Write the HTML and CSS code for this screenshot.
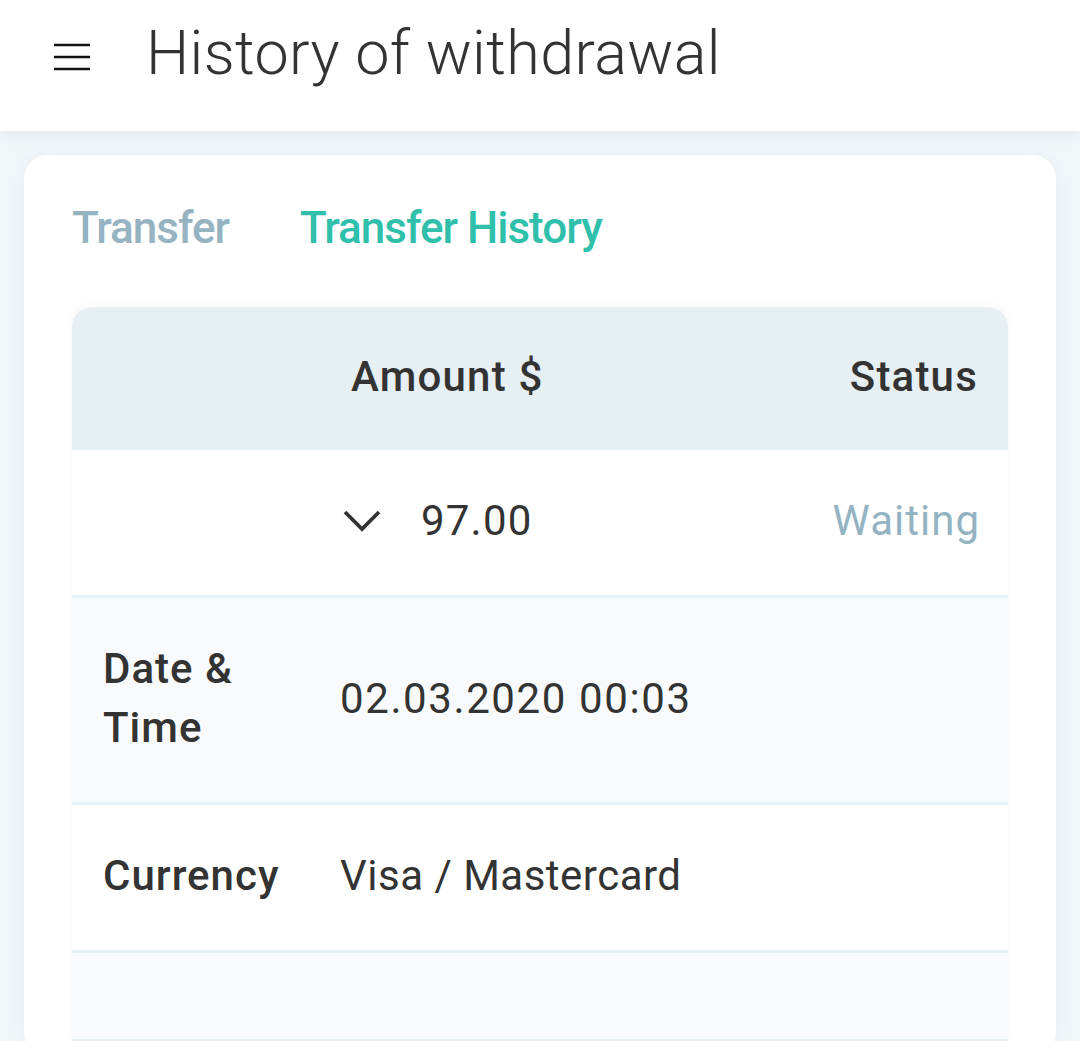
FILE: index.html
```html
<!DOCTYPE html>
<html lang="en">
<head>
<meta charset="utf-8">
<title>History of withdrawal</title>
<link rel="stylesheet" href="styles.css">
</head>
<body>
<header class="topbar">
  <button class="menu-btn" aria-label="Menu">
    <svg width="36" height="28" viewBox="0 0 36 28"><path d="M0 2h36M0 14h36M0 26h36" stroke="#111" stroke-width="2.4" fill="none"/></svg>
  </button>
  <h1 class="title">History of withdrawal</h1>
</header>
<main class="page">
  <section class="card">
    <nav class="tabs">
      <span class="tab">Transfer</span>
      <span class="tab active">Transfer History</span>
    </nav>
    <div class="table">
      <div class="row head">
        <div class="cell label"></div>
        <div class="cell value amount-head">Amount $</div>
        <div class="cell status">Status</div>
      </div>
      <div class="row">
        <div class="cell label"></div>
        <div class="cell value amount">
          <svg class="chev" width="38" height="24" viewBox="0 0 38 24"><path d="M2 3l17 17L36 3" stroke="#333" stroke-width="3.8" fill="none"/></svg>
          <span>97.00</span>
        </div>
        <div class="cell status waiting">Waiting</div>
      </div>
      <div class="row alt">
        <div class="cell label">Date &amp;<br>Time</div>
        <div class="cell value digits">02.03.2020 00:03</div>
        <div class="cell status"></div>
      </div>
      <div class="row">
        <div class="cell label">Currency</div>
        <div class="cell value">Visa / Mastercard</div>
        <div class="cell status"></div>
      </div>
      <div class="row alt">
        <div class="cell label"></div>
        <div class="cell value"></div>
        <div class="cell status"></div>
      </div>
    </div>
  </section>
</main>
</body>
</html>
```

FILE: styles.css
```css
* { box-sizing: border-box; }
html, body { margin: 0; padding: 0; }
body {
  background: #f1f6f9;
  font-family: Roboto, "Noto Sans", sans-serif;
  color: #333;
  height: 1041px;
  overflow: hidden;
}
.topbar {
  height: 131px;
  background: #fff;
  display: flex;
  align-items: center;
  padding-left: 54px;
  box-shadow: 0 3px 14px rgba(40, 80, 110, 0.08);
  position: relative;
  z-index: 2;
}
.menu-btn {
  border: 0;
  background: none;
  padding: 0;
  display: flex;
  margin-top: -18px;
}
.title {
  margin: -24px 0 0 56px;
  font-weight: 300;
  font-size: 61px;
  line-height: 1;
  color: #333;
  letter-spacing: 0.4px;
}
.page {
  padding: 24px 24px 0;
}
.card {
  background: #fff;
  border-radius: 24px;
  padding: 0 48px;
  box-shadow: 0 0 16px rgba(60, 110, 140, 0.06);
  min-height: 900px;
}
.tabs {
  display: flex;
  gap: 71px;
  padding: 43px 0 0 0;
  height: 152px;
}
.tab {
  font-size: 44px;
  font-weight: 500;
  line-height: 60px;
  color: #96b3c2;
  letter-spacing: -1px;
}
.tab.active { color: #2fbfab; }
.table {
  border-radius: 20px 20px 0 0;
  overflow: hidden;
  box-shadow: 0 0 8px rgba(60, 110, 140, 0.07);
}
.row {
  display: grid;
  grid-template-columns: 237px 1fr auto;
  align-items: center;
  padding: 41px 30px 45px 31px;
  border-bottom: 3px solid #e6eff4;
  font-size: 42px;
  line-height: 59px;
  background: #fff;
  letter-spacing: 0.5px;
}
.row.alt { background: #f8fafc; }
.row.head {
  background: #e6eff4;
  padding-top: 40px;
  padding-bottom: 44px;
  border-bottom: 0;
  font-weight: 500;
  letter-spacing: 1.2px;
}
.cell.label { font-weight: 500; letter-spacing: 1px; }
.amount-head { padding-left: 11px; }
.amount {
  display: flex;
  align-items: center;
  gap: 40px;
  padding-left: 3px;
  letter-spacing: 1.2px;
}
.digits { letter-spacing: 1.6px; }
.chev { display: block; margin-top: 0; }
.status { text-align: right; font-weight: 500; }
.status.waiting { color: #94b3c2; font-weight: 400; letter-spacing: 1px; margin-right: -2px; }
```
